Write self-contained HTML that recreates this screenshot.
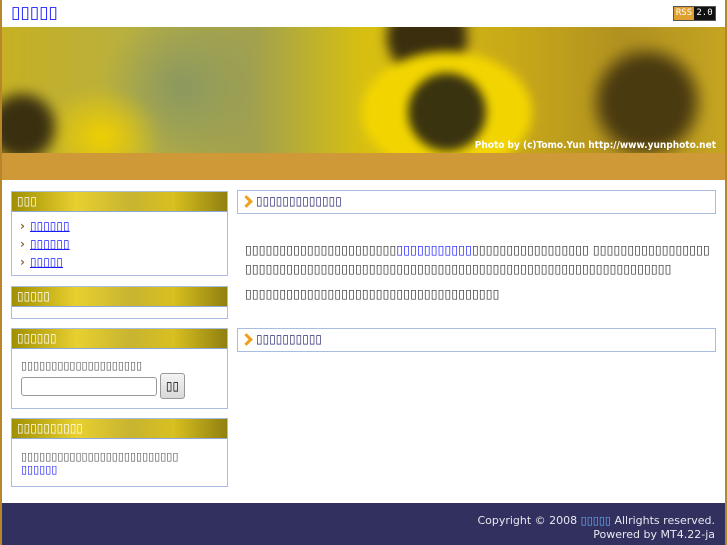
<!DOCTYPE html>
<html><head><meta charset="utf-8"><style>
*{margin:0;padding:0;box-sizing:border-box}
body{width:727px;height:545px;overflow:hidden;background:#fff;font-family:"DejaVu Sans","Liberation Sans",sans-serif;font-size:12px;position:relative}
.frame{position:absolute;left:0;top:0;width:727px;height:545px;border-left:2px solid #b8862a;border-right:2px solid #b8862a;z-index:5;pointer-events:none}
.t{font-family:"DejaVu Sans",sans-serif;white-space:nowrap}
#title{position:absolute;left:11px;top:3px;font-size:17px;color:#1a1aff;text-decoration:underline}
#rss{position:absolute;left:673px;top:6px;width:43px;height:15px;border:1px solid #555;display:flex;font:9px "DejaVu Sans Mono",monospace}
#rss span:first-child{background:#e0a030;color:#fff;width:20px;text-align:center;line-height:13px}
#rss span:last-child{background:#111;color:#fff;flex:1;text-align:center;line-height:13px}
#banner{position:absolute;left:2px;top:27px;width:723px;height:126px;overflow:hidden}
#bg{position:absolute;left:-15px;top:-15px;right:-15px;bottom:-15px;filter:blur(5px);background:
radial-gradient(circle at 460px 100px,#3a3310 0 38px,transparent 40px),
radial-gradient(ellipse 120px 85px at 460px 100px,#f2d500 0 70%,transparent 72%),
radial-gradient(circle at 660px 90px,#4a3a10 0 40px,transparent 60px),
radial-gradient(circle at 35px 115px,#3a3010 0 25px,transparent 40px),
radial-gradient(circle at 440px 25px,#3a2e0e 0 35px,transparent 45px),
radial-gradient(ellipse 60px 50px at 115px 125px,#f0d000,transparent),
radial-gradient(ellipse 80px 80px at 195px 75px,#8a9860,transparent),
linear-gradient(90deg,#c8b020,#b8b040 20%,#a0a050 35%,#d8c010 50%,#c8a818 70%,#b09020 85%,#c8a820)}
#banner .cap{position:absolute;right:9px;bottom:2px;color:#fff;font:bold 10px "DejaVu Sans Condensed","DejaVu Sans",sans-serif}
#gold{position:absolute;left:2px;top:153px;width:723px;height:27px;background:#d09938}
.box{position:absolute;left:11px;width:217px;border:1px solid #a9bde0;background:#fff}
.box h3{height:20px;background:linear-gradient(90deg,#a09000,#e8d030 30%,#c8b430 55%,#d8c020 75%,#908010);border-bottom:1px solid #8fa8d8;color:#fff;font-weight:normal;font-size:12px;padding:2px 0 0 5px}
.box ul{list-style:none;padding:7px 0 0 8px}
.box li{height:18px;color:#1a1aff;text-decoration:underline}
.box li:before{content:"›";color:#8a6a30;text-decoration:none;display:inline-block;width:10px;font-weight:bold}
.mh{position:absolute;left:237px;width:479px;height:24px;border:1px solid #a9bde0;color:#2a2a70;padding:3px 0 0 18px;font-size:12px}
.mh:before{content:"";position:absolute;left:4px;top:6px;width:6px;height:6px;border-right:3px solid #f0a020;border-bottom:3px solid #f0a020;transform:rotate(-45deg)}
.p{position:absolute;left:245px;color:#333;font-size:12.5px;line-height:19px;width:470px}
a{color:#1a1aff}
#foot{position:absolute;left:2px;top:503px;width:723px;height:42px;background:#31305f;color:#e8e8f0;text-align:right;padding:11px 10px 0 0;font-size:11px;line-height:13.5px}
#foot a{color:#6ab0ff}
</style></head><body>
<div class="frame"></div>
<div id="title" class="t">▯▯▯▯▯</div>
<div id="rss"><span>RSS</span><span>2.0</span></div>
<div id="banner"><div id="bg"></div><div class="cap">Photo by (c)Tomo.Yun http://www.yunphoto.net</div></div>
<div id="gold"></div>

<div class="box" style="top:191px;height:85px"><h3 class="t">▯▯▯</h3>
<ul class="t"><li>▯▯▯▯▯▯</li><li>▯▯▯▯▯▯</li><li>▯▯▯▯▯</li></ul></div>
<div class="box" style="top:286px;height:33px"><h3 class="t">▯▯▯▯▯</h3></div>
<div class="box" style="top:328px;height:81px"><h3 class="t">▯▯▯▯▯▯</h3>
<div class="t" style="padding:10px 0 0 9px;color:#555;font-size:11px">▯▯▯▯▯▯▯▯▯▯▯▯▯▯▯▯▯▯▯▯</div>
<div style="position:absolute;left:9px;top:48px;width:136px;height:19px;border:1px solid #999;border-radius:3px"></div>
<div class="t" style="position:absolute;left:148px;top:44px;width:25px;height:26px;border:1px solid #999;border-radius:3px;background:linear-gradient(#f4f4f4,#d8d8d8);text-align:center;line-height:24px">▯▯</div>
</div>
<div class="box" style="top:418px;height:69px"><h3 class="t">▯▯▯▯▯▯▯▯▯▯</h3>
<div class="t" style="padding:11px 0 0 9px;color:#555;font-size:11px;line-height:13px">▯▯▯▯▯▯▯▯▯▯▯▯▯▯▯▯▯▯▯▯▯▯▯▯▯▯<br><a>▯▯▯▯▯▯</a></div></div>

<div class="mh t" style="top:190px">▯▯▯▯▯▯▯▯▯▯▯▯▯</div>
<div class="p t" style="top:240px">▯▯▯▯▯▯▯▯▯▯▯▯▯▯▯▯▯▯▯▯▯▯<a>▯▯▯▯▯▯▯▯▯▯▯</a>▯▯▯▯▯▯▯▯▯▯▯▯▯▯▯▯▯ ▯▯▯▯▯▯▯▯▯▯▯▯▯▯▯▯▯<br>▯▯▯▯▯▯▯▯▯▯▯▯▯▯▯▯▯▯▯▯▯▯▯▯▯▯▯▯▯▯▯▯▯▯▯▯▯▯▯▯▯▯▯▯▯▯▯▯▯▯▯▯▯▯▯▯▯▯▯▯▯▯</div>
<div class="p t" style="top:284px">▯▯▯▯▯▯▯▯▯▯▯▯▯▯▯▯▯▯▯▯▯▯▯▯▯▯▯▯▯▯▯▯▯▯▯▯▯</div>
<div class="mh t" style="top:328px">▯▯▯▯▯▯▯▯▯▯</div>

<div id="foot">Copyright © 2008 <a class="t">▯▯▯▯▯</a> Allrights reserved.<br>Powered by MT4.22-ja</div>
</body></html>
